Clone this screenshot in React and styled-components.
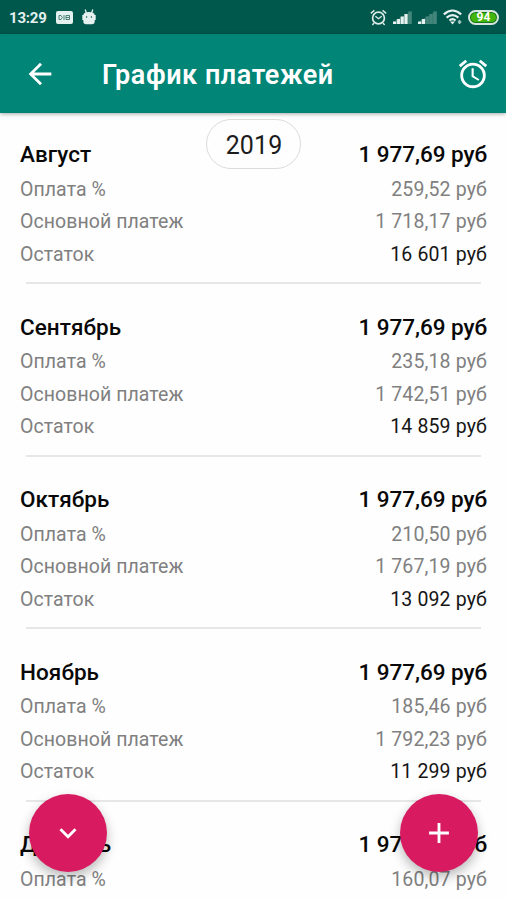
import React from 'react';
import styled, { createGlobalStyle } from 'styled-components';
import { MdArrowBack, MdAlarm, MdAdd, MdExpandMore } from 'react-icons/md';

const GlobalStyle = createGlobalStyle`
  * {
    box-sizing: border-box;
  }
  body {
    margin: 0;
    background: #ffffff;
    font-family: Roboto, 'Liberation Sans', sans-serif;
  }
`;

const Screen = styled.div`
  position: relative;
  width: 506px;
  height: 900px;
  overflow: hidden;
  display: flex;
  flex-direction: column;
  background: #fefefe;
`;

const StatusBar = styled.div`
  flex: none;
  height: 34px;
  padding: 0 7px 0 9px;
  display: flex;
  align-items: center;
  justify-content: space-between;
  background: #00574b;
  color: #e4f1ef;
`;

const StatusGroup = styled.div`
  display: flex;
  align-items: center;
  gap: ${(props) => props.$gap};

  svg {
    display: block;
  }
`;

const Time = styled.span`
  font-size: 15px;
  font-weight: 700;
  line-height: 34px;
  letter-spacing: -0.2px;
  padding-top: 1px;
`;

const Battery = styled.div`
  width: 31px;
  height: 15px;
  margin-left: -1px;
  border: 2px solid #d5e6df;
  border-radius: 8px;
  background: #43b60d;
  box-shadow: inset 0 0 0 1px #17751e;
  color: #ffffff;
  font-size: 12px;
  font-weight: 700;
  line-height: 11px;
  text-align: center;
`;

const Toolbar = styled.div`
  flex: none;
  z-index: 1;
  height: 79px;
  padding: 0 16px 0 23px;
  display: flex;
  align-items: center;
  background: #008577;
  box-shadow: 0 1px 4px rgba(0, 0, 0, 0.35);
  color: #ffffff;

  svg {
    display: block;
  }
`;

const Title = styled.h1`
  flex: 1;
  margin: 0 0 0 45px;
  padding-top: 3px;
  font-size: 27px;
  font-weight: 600;
  line-height: 32px;
  letter-spacing: 0.55px;
`;

const List = styled.div`
  padding-top: 22.5px;
`;

const Month = styled.div`
  padding: 0 19px 0 20px;
`;

const Divider = styled.div`
  height: 2px;
  margin: 11.5px 6px 24px;
  background: #e7e7e7;
`;

const Row = styled.div`
  display: flex;
  align-items: center;
  justify-content: space-between;
  height: 32.5px;
  font-size: 19.5px;
  color: #808080;
`;

const HeadRow = styled(Row)`
  height: 37.5px;
  font-size: 22.5px;
  font-weight: 500;
  color: #080808;
`;

const Label = styled.span`
  letter-spacing: 0.06px;
`;

const Value = styled.span`
  letter-spacing: ${(props) => (props.$head ? '-0.06px' : '0.14px')};
  color: ${(props) => (props.$dark ? '#161616' : 'inherit')};
`;

const YearChip = styled.div`
  position: absolute;
  top: 119px;
  left: 206px;
  width: 95px;
  height: 50px;
  padding-left: 1px;
  border: 1px solid #dedbda;
  border-radius: 25px;
  background: #fefefe;
  color: #1c1c1c;
  font-size: 25px;
  line-height: 52px;
  letter-spacing: 0.1px;
  text-align: center;
`;

const Fab = styled.button`
  position: absolute;
  top: 794px;
  left: ${(props) => props.$left};
  width: 78px;
  height: 78px;
  padding: 0;
  border: none;
  border-radius: 50%;
  display: flex;
  align-items: center;
  justify-content: center;
  background: #d81b60;
  color: #ffffff;
  box-shadow: 0 5px 12px rgba(0, 0, 0, 0.28);
`;

const months = [
  { name: 'Август', interest: '259,52', principal: '1 718,17', rest: '16 601' },
  { name: 'Сентябрь', interest: '235,18', principal: '1 742,51', rest: '14 859' },
  { name: 'Октябрь', interest: '210,50', principal: '1 767,19', rest: '13 092' },
  { name: 'Ноябрь', interest: '185,46', principal: '1 792,23', rest: '11 299' },
  { name: 'Декабрь', interest: '160,07' },
];

const CardIcon = () => (
  <svg width="17" height="13" viewBox="0 0 17 13">
    <rect width="17" height="13" rx="2" fill="#e4f1ef" />
    <path d="M3 4.5h2l1.3 2L5 8.5H3zM8 4v5M10 4.5h3.5v4H10zM10 6.5h4" fill="none" stroke="#4b8179" strokeWidth="1" />
  </svg>
);

const RobotIcon = () => (
  <svg width="14" height="16" viewBox="0 0 14 16">
    <path d="M3.2 0.5l1.2 3.5M10.8 0.5l-1.2 3.5" stroke="#e4f1ef" strokeWidth="1.3" />
    <path d="M1.3 6Q1.6 3 7 3t5.7 3h1v5h-1v1.5Q12.6 15.3 10 15.3H4Q1.4 15.3 1.3 12.5V11h-1V6z" fill="#e4f1ef" />
    <circle cx="4.6" cy="8" r="0.7" fill="#00574b" />
    <circle cx="9.4" cy="8" r="0.7" fill="#00574b" />
  </svg>
);

const SmallAlarmIcon = () => (
  <svg width="17" height="17" viewBox="0 0 17 17" fill="none" stroke="#dcebe8" strokeWidth="1.7">
    <circle cx="8.5" cy="9" r="5.9" />
    <path d="M0.8 4.4l3.6-3M16.2 4.4l-3.6-3M5.4 7.2l3.1 2.5 3.2-2.5M4 14l-1.6 2M13 14l1.6 2" strokeWidth="1.4" />
  </svg>
);

const SignalIcon = ({ level }) => (
  <svg width="19" height="13" viewBox="0 0 19 13">
    <path d="M0 13V11L19 0V13z" fill="#2f776b" />
    {[0, 1, 2, 3, 4].map((i) => (
      <rect
        key={i}
        x={i * 3.8}
        y={10.5 - i * 2.5}
        width="3.2"
        height={2.5 + i * 2.5}
        fill={i < level ? '#e4f1ef' : '#43857a'}
      />
    ))}
  </svg>
);

const WifiIcon = () => (
  <svg width="20" height="16" viewBox="0 0 20 16" fill="none" stroke="#e4f1ef" strokeWidth="2.1">
    <path d="M0.8 5.4Q9.5-2.4 18.2 5.4M3.6 8.6q5.9-5 11.8 0M6.4 11.5q3.1-2.6 6.2 0" />
    <path d="M7 12.6h5L9.5 15.6z" fill="#e4f1ef" stroke="none" />
    <path d="M16.5 11v4M14.8 13h3.6" stroke="#a9cbc5" strokeWidth="1.7" />
  </svg>
);

const MonthBlock = ({ month }) => (
  <Month>
    <HeadRow>
      <Label>{month.name}</Label>
      <Value $head>1 977,69 руб</Value>
    </HeadRow>
    <Row>
      <Label>Оплата %</Label>
      <Value>{month.interest} руб</Value>
    </Row>
    {month.principal && (
      <>
        <Row>
          <Label>Основной платеж</Label>
          <Value>{month.principal} руб</Value>
        </Row>
        <Row>
          <Label>Остаток</Label>
          <Value $dark>{month.rest} руб</Value>
        </Row>
        <Divider />
      </>
    )}
  </Month>
);

const App = () => {
  return (
    <Screen>
      <GlobalStyle />
      <StatusBar>
        <StatusGroup $gap="9px">
          <Time>13:29</Time>
          <CardIcon />
          <RobotIcon />
        </StatusGroup>
        <StatusGroup $gap="6px">
          <SmallAlarmIcon />
          <SignalIcon level={4} />
          <SignalIcon level={2} />
          <WifiIcon />
          <Battery>94</Battery>
        </StatusGroup>
      </StatusBar>
      <Toolbar>
        <MdArrowBack size={34} />
        <Title>График платежей</Title>
        <MdAlarm size={34} />
      </Toolbar>
      <List>
        {months.map((month) => (
          <MonthBlock key={month.name} month={month} />
        ))}
      </List>
      <YearChip>2019</YearChip>
      <Fab $left="29px">
        <MdExpandMore size={34} />
      </Fab>
      <Fab $left="400px">
        <MdAdd size={34} />
      </Fab>
    </Screen>
  );
};

export default App;
